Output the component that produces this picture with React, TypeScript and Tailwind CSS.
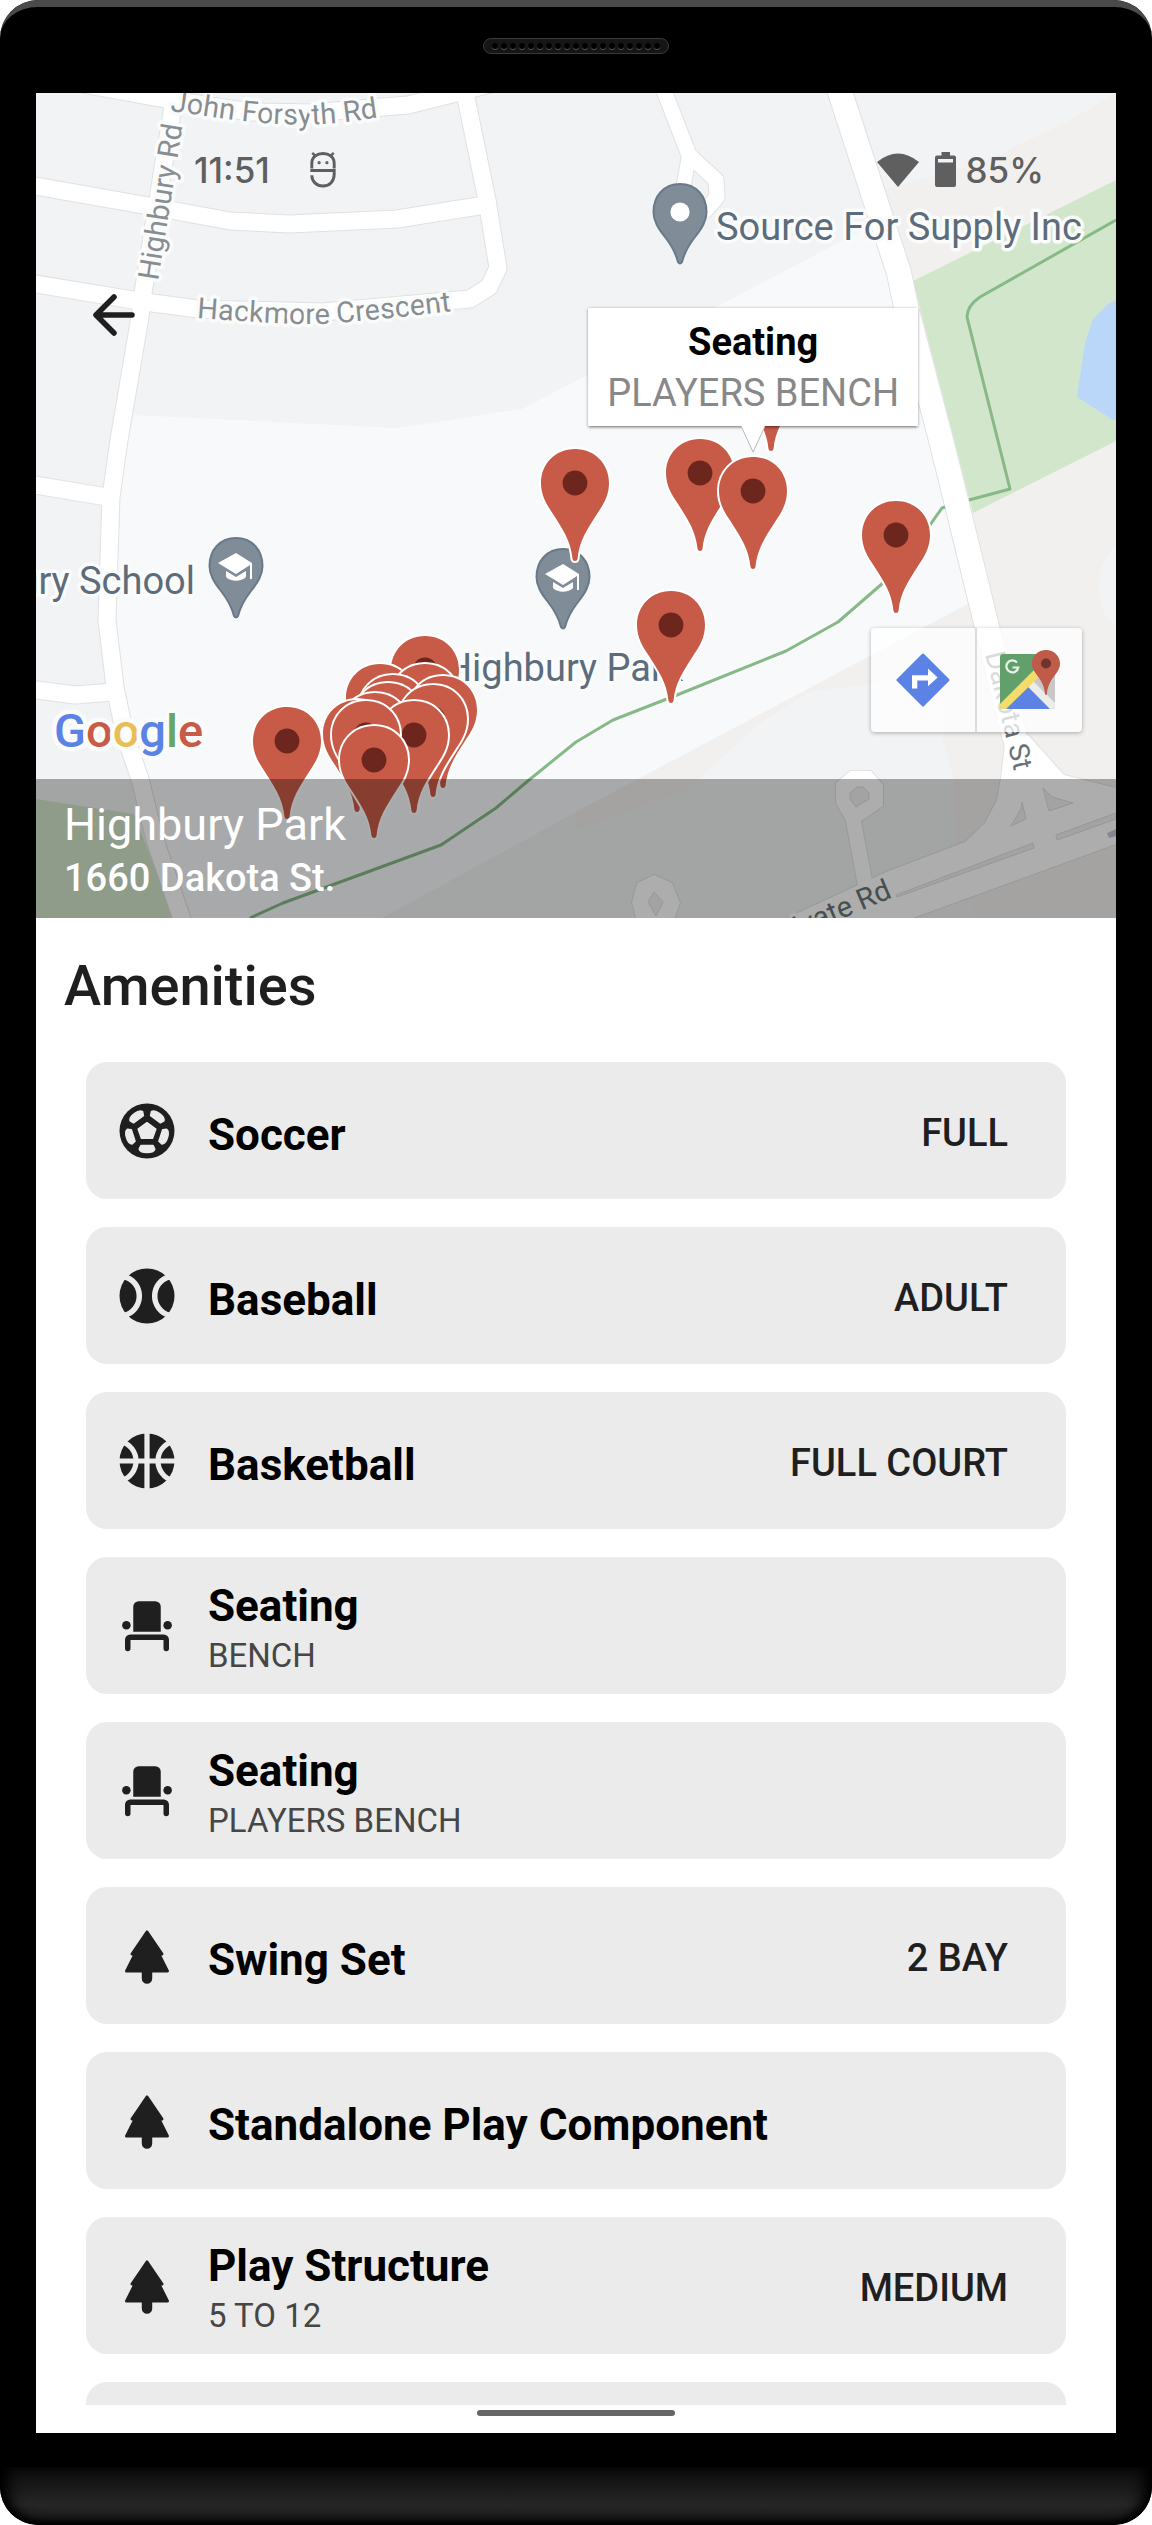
import type { ReactNode } from "react";

type IconName = "soccer" | "baseball" | "basketball" | "seat" | "tree";

type Amenity = { icon: IconName; name: string; detail?: string; size?: string };

const AMENITIES: Amenity[] = [
  { icon: "soccer", name: "Soccer", size: "FULL" },
  { icon: "baseball", name: "Baseball", size: "ADULT" },
  { icon: "basketball", name: "Basketball", size: "FULL COURT" },
  { icon: "seat", name: "Seating", detail: "BENCH" },
  { icon: "seat", name: "Seating", detail: "PLAYERS BENCH" },
  { icon: "tree", name: "Swing Set", size: "2 BAY" },
  { icon: "tree", name: "Standalone Play Component" },
  { icon: "tree", name: "Play Structure", detail: "5 TO 12", size: "MEDIUM" },
  { icon: "tree", name: "Play Structure", detail: "2 TO 5", size: "SMALL" },
];

const GLYPHS: Record<IconName, ReactNode> = {
  soccer: (
    <>
      <circle cx="12" cy="12" r="10" />
      <g fill="#ebebeb" stroke="#ebebeb" strokeWidth="0.6" strokeLinejoin="round">
        <path d="M12 9 15.2 11.3 14 14.6H10L8.8 11.3Z" />
        {[0, 72, 144, 216, 288].map((a) => (
          <path
            key={a}
            transform={`rotate(${a} 12 12)`}
            d="M9.8 17.3H14.2L14.8 18.6C14.5 19.4 13 19.8 12 19.8S9.5 19.4 9.2 18.6Z"
          />
        ))}
      </g>
    </>
  ),
  baseball: (
    <>
      <circle cx="12" cy="12" r="10" />
      <g fill="none" stroke="#ebebeb" strokeWidth="2">
        <path d="M3.6 4.9A7.3 7.3 0 0 1 3.6 19.1" />
        <path d="M20.4 4.9A7.3 7.3 0 0 0 20.4 19.1" />
      </g>
    </>
  ),
  basketball: (
    <>
      <circle cx="12" cy="12" r="10" />
      <g fill="none" stroke="#ebebeb" strokeWidth="1.9">
        <path d="M12 1V23M1 12H23" />
        <path d="M2.7 4.9A7.4 7.4 0 0 1 2.7 19.1" />
        <path d="M21.3 4.9A7.4 7.4 0 0 0 21.3 19.1" />
      </g>
    </>
  ),
  seat: (
    <>
      <path d="M7 14.1V5a2 2 0 0 1 2-2h6a2 2 0 0 1 2 2v9.1Z" />
      <circle cx="4.5" cy="11.7" r="1.55" />
      <circle cx="19.5" cy="11.7" r="1.55" />
      <path
        d="M5 20.2V17a.9.9 0 0 1 .9-.9H18.1a.9.9 0 0 1 .9.9V20.2"
        fill="none"
        stroke="#1f1f1f"
        strokeWidth="2"
        strokeLinecap="round"
      />
    </>
  ),
  tree: (
    <path
      d="M12 3.2 17.5 11.3H16.4L19.5 17.5H13.4V20.2a1.4 1.4 0 0 1-2.8 0V17.5H4.5L7.6 11.3H6.5Z"
      stroke="#1f1f1f"
      strokeWidth="1"
      strokeLinejoin="round"
    />
  ),
};

function AmenityRow({ icon, name, detail, size }: Amenity) {
  return (
    <li className="flex min-h-[137px] shrink-0 items-center rounded-[21px] bg-[#ebebeb] pr-[58px] pl-7">
      <svg viewBox="0 0 24 24" className="size-[66px] shrink-0" fill="#1f1f1f" aria-hidden="true">
        {GLYPHS[icon]}
      </svg>
      <div className="min-w-0 flex-1 pt-2 pl-7">
        <h3 className="text-[44px] leading-[52px] font-bold text-black">{name}</h3>
        {detail && <p className="text-[33px] leading-[48px] text-[#464646]">{detail}</p>}
      </div>
      {size && <p className="pt-1 text-[38px] leading-[46px] font-medium text-[#1f1f1f]">{size}</p>}
    </li>
  );
}

const ROADS: { d: string; w: number }[] = [
  { d: "M50 78 165 99 250 112 310 113 408 105 452 94 490 84", w: 17 },
  { d: "M174 100 143 293 140 317 119 440 111 497 107 620 115 687 125 735 140 779 155 840 184 925", w: 17 },
  { d: "M30 185 143 205 230 221 290 224 397 219 485 205", w: 17 },
  { d: "M464 88 487 200 498 268 489 287 470 299 323 312 198 309 145 302 30 283", w: 17 },
  { d: "M30 484 107 497", w: 17 },
  { d: "M30 689 75 695 113 692", w: 17 },
  { d: "M663 88 689 155 716 180 717 197 704 212", w: 15 },
  { d: "M690 150 682 195", w: 14 },
  { d: "M838 86 899 273 906 307 941 440 951 480 987 627 1018 750", w: 24 },
];

const ROAD_AREAS = [
  "M1006 735 1001 778 997 800 985 823 965 842 886 872 787 918V930H880L1116 844V788L1064 775 1028 735Z",
  "M850 771H871L883 785V806L861 821 872 880 858 886 846 821 836 803V783Z",
  "M654 875 672 883 680 903 672 925H638L632 903 637 883Z",
];

const ROAD_GAPS = [
  "M1043 788 1052 797 1073 803 1049 811Z",
  "M1022 802 1026 819 1011 826 1021 809Z",
  "M1056 835 1116 813V819L1057 840Z",
  "M896 895 1033 843 1034 848 897 897Z",
  "M857 787H863L869 793V799L856 807 850 799V793Z",
  "M654 892 663 902 656 916 648 902Z",
];

/* Centre of each marker's dot, drawn from back to front. */
const MARKERS: [number, number][] = [
  [771, 373],
  [700, 473],
  [575, 483],
  [753, 491],
  [896, 535],
  [671, 625],
  [425, 670],
  [380, 698],
  [425, 698],
  [393, 709],
  [443, 710],
  [388, 717],
  [433, 719],
  [375, 727],
  [357, 734],
  [414, 735],
  [366, 735],
  [287, 741],
  [374, 760],
];

function Marker({ x, y }: { x: number; y: number }) {
  return (
    <g transform={`translate(${x} ${y})`}>
      <path
        d="M0-34C-20-34-34-19-34 0-34 13-28 22-22 31-13 45-4 58-2.5 76Q-2 78 0 78T2.5 76C4 58 13 45 22 31 28 22 34 13 34 0 34-19 20-34 0-34Z"
        fill="#c75b47"
        stroke="#fff"
        strokeWidth="4"
        paintOrder="stroke"
      />
      <circle r="12.4" fill="#6c261d" />
    </g>
  );
}

function PlacePin({ x, y, school }: { x: number; y: number; school?: boolean }) {
  return (
    <g transform={`translate(${x} ${y})`}>
      <path
        d="M0-27C-16-27-26.500-15-26.500 1-26.500 10-22 17-15 26-8 35-4 43-2 51Q0 54 2 51C4 43 8 35 15 26 22 17 26.500 10 26.500 1 26.500-15 16-27 0-27Z"
        fill="#808c98"
        stroke="#687a89"
        strokeWidth="2"
      />
      {school ? (
        <g fill="#fff">
          <path d="M0-12-18-2 0 9 14 0V14H16V-2Z" />
          <path d="M-10 6 0 12 10 6V12C5 17-5 17-10 12Z" />
        </g>
      ) : (
        <circle cy="1" r="9.600" fill="#fff" />
      )}
    </g>
  );
}

function MapCanvas() {
  return (
    <svg
      viewBox="36 93 1080 825"
      preserveAspectRatio="xMidYMid slice"
      className="absolute inset-0 size-full"
      fontFamily="Roboto, sans-serif"
      role="img"
      aria-label="Map of Highbury Park"
    >
      <rect x="36" y="93" width="1080" height="825" fill="#f1f3f4" />
      <path d="M134 415 397 428 522 409 576 381 716 307 840 242 890 215 951 480 981 597 576 812 382 918H180L107 690 105 500Z" fill="#f8f9fb" />
      <path d="M1116 93 1065 123 980 163 875 192 906 307 951 480 987 627 1018 750V918H1116Z" fill="#f2f0ee" />
      <path d="M981 597 576 812V830L686 790 760 723 811 691 866 685 945 675 943 740 954 780 956 850 975 918H1020V603Z" fill="#f2f0ee" />
      <path d="M1116 547Q1099 560 1099 587T1116 627Z" fill="#f1f3f4" />
      <path d="M1116 180 913 281 973 513 1116 441Z" fill="#d1e6cb" />
      <path d="M1116 300 1108 304 1093 319 1085 343 1077 397 1113 420H1116Z" fill="#bad7f9" />
      <path d="M36 799 134 814 174 918H36Z" fill="#d1e6cb" />

      <g fill="none" stroke="#dfe1e4" strokeLinejoin="round">
        {ROADS.map((r) => (
          <path key={r.d} d={r.d} strokeWidth={r.w + 2} />
        ))}
        {ROAD_AREAS.map((d) => (
          <path key={d} d={d} strokeWidth="2" />
        ))}
      </g>
      <g fill="none" stroke="#fff" strokeLinejoin="round">
        {ROADS.map((r) => (
          <path key={r.d} d={r.d} strokeWidth={r.w} />
        ))}
      </g>
      <g fill="#fff">
        {ROAD_AREAS.map((d) => (
          <path key={d} d={d} />
        ))}
      </g>
      <g fill="#f1f0ee" stroke="#dcdee0">
        {ROAD_GAPS.map((d) => (
          <path key={d} d={d} />
        ))}
      </g>
      <path d="M1107 833 1116 829V836L1109 838Z" fill="#c4c8d4" />

      <g fill="none" stroke="#87b987" strokeWidth="3" strokeLinejoin="round">
        <path d="M1116 220 980 297Q967 306 967 317L1010 489 969 500" />
        <path d="M945 507 942 508 930 525 883 583 838 622 786 651 677 695 613 720 576 742 529 780 496 808 441 845 283 903 250 918" />
      </g>

      <defs>
        <path id="john-forsyth" d="M170 111C205 115 240 123 290 124.500 325 125.500 350 122 400 114" />
        <path id="hackmore" d="M197 318C240 321 290 325 325 324 365 321 410 316 470 309" />
      </defs>
      <g fontSize="29" fill="#888d91" stroke="#fafbfb" strokeWidth="7" strokeLinejoin="round" paintOrder="stroke">
        <text>
          <textPath href="#john-forsyth">John Forsyth Rd</textPath>
        </text>
        <text>
          <textPath href="#hackmore">Hackmore Crescent</textPath>
        </text>
        <text transform="translate(158 281) rotate(-81)">Highbury Rd</text>
        <text transform="translate(985 654) rotate(76)" fontSize="28" fill="#697377" stroke="#fff">
          Dakota St
        </text>
        <text transform="translate(893 897) rotate(-23)" textAnchor="end" fill="#697377" stroke="#fff">
          Private Rd
        </text>
      </g>

      <PlacePin x={680} y={211} />
      <PlacePin x={236} y={565} school />
      <PlacePin x={563} y={576} school />
      <g fontSize="38" fill="#5d6c7b" stroke="#fafbfb" strokeWidth="7" strokeLinejoin="round" paintOrder="stroke">
        <text x="716" y="240">
          Source For Supply Inc
        </text>
        <text x="195" y="594" textAnchor="end">
          Highbury School
        </text>
        <text x="445" y="681">
          Highbury Park
        </text>
      </g>

      {MARKERS.map(([x, y]) => (
        <Marker key={`${x}-${y}`} x={x} y={y} />
      ))}

      <text
        x="54"
        y="747"
        fontSize="47"
        fontWeight="500"
        stroke="#fafbfb"
        strokeWidth="9"
        strokeLinejoin="round"
        paintOrder="stroke"
      >
        <tspan fill="#5c82e6">G</tspan>
        <tspan fill="#c75b47">o</tspan>
        <tspan fill="#e8bf57">o</tspan>
        <tspan fill="#5c82e6">g</tspan>
        <tspan fill="#6aa564">l</tspan>
        <tspan fill="#c75b47">e</tspan>
      </text>
    </svg>
  );
}

function StatusBar() {
  return (
    <div className="flex items-center justify-between pt-[58px] pr-[72px] pl-[158px] font-['Inter',sans-serif] text-[35px] leading-[36px] font-medium text-[#5f5f5f]">
      <div className="flex items-center gap-10">
        <span>11:51</span>
        <svg viewBox="0 0 26 38" className="h-[37px] w-[26px]" fill="none" stroke="#5f5f5f" strokeWidth="3" aria-hidden="true">
          <path d="M1.500 18V13C1.500 6 7 2.500 13 2.500S24.500 6 24.500 13V18" />
          <path d="M0 20H24.500V24C24.500 31 20 36 13 36S1.500 31 1.500 25" />
          <path d="M2 2 6 6M24 2 20 6" strokeWidth="2.500" />
          <circle cx="9" cy="12" r="0.700" strokeWidth="2" />
          <circle cx="17" cy="12" r="0.700" strokeWidth="2" />
        </svg>
      </div>
      <div className="flex items-center">
        <svg viewBox="0 0 42 34" className="h-[34px] w-[42px]" fill="#5f5f5f" aria-hidden="true">
          <path d="M0 9Q21-8 42 9L21 34Z" />
        </svg>
        <svg viewBox="0 0 21 35" className="ml-4 h-[35px] w-[21px]" fill="#5f5f5f" aria-hidden="true">
          <path fillRule="evenodd" d="M6.500 0h8.500v3.500H19a2 2 0 0 1 2 2V33a2 2 0 0 1-2 2H2a2 2 0 0 1-2-2V5.500a2 2 0 0 1 2-2H6.500ZM3 7V10.500H18V7Z" />
        </svg>
        <span className="ml-2.5">85%</span>
      </div>
    </div>
  );
}

function InfoWindow() {
  return (
    <div className="absolute top-[26.1%] left-[66.4%] -translate-x-1/2">
      <div className="bg-white px-[19px] pt-2.5 pb-1.5 text-center text-[38px] leading-[48px] whitespace-nowrap shadow-[0_1px_3px_rgba(0,0,0,0.6)]">
        <p className="font-bold text-black">Seating</p>
        <p className="leading-[54px] text-[#888]">PLAYERS BENCH</p>
      </div>
      <svg viewBox="0 0 24 27" className="mx-auto block h-[27px] w-6" aria-hidden="true">
        <path d="M0 0 12 26 24 0" fill="#fff" stroke="#b8b8b8" strokeWidth="1" />
      </svg>
    </div>
  );
}

function MapActions() {
  return (
    <div className="absolute right-[34px] bottom-[186px] flex h-[104px] rounded bg-white/75 shadow-[0_1px_4px_rgba(0,0,0,0.3)]">
      <button type="button" aria-label="Directions" className="grid w-[106px] place-items-center border-r-2 border-[#dcdcdc]">
        <svg viewBox="0 0 54 54" className="size-[54px]" aria-hidden="true">
          <path d="M27 2 52 27 27 52 2 27Z" fill="#5c82e6" stroke="#5c82e6" strokeWidth="3" strokeLinejoin="round" />
          <path d="M16 35.500V22.300H32V15.600L41.600 24.600 32 33.300V27.600H21.300V35.500Z" fill="#fff" />
        </svg>
      </button>
      <button type="button" aria-label="Open in Google Maps" className="grid w-[105px] place-items-center">
        <svg viewBox="0 0 60 60" className="size-[60px]" aria-hidden="true">
          <clipPath id="maps-tile">
            <rect y="4" width="55" height="55" rx="3" />
          </clipPath>
          <g clipPath="url(#maps-tile)">
            <rect y="4" width="55" height="55" fill="#62a06b" />
            <path d="M28 37 60 4V64Z" fill="#c8c8c8" />
            <path d="M28 37 33 31 60 58V64H54Z" fill="#ececec" />
            <path d="M6 59 28 37 50 59Z" fill="#5c82e6" />
            <path d="M-2 56 42 12V24L4 61H-2Z" fill="#f3dc6c" />
          </g>
          <path d="M17 12.500A6 6 0 1 0 18.300 17.500H12.500" fill="none" stroke="#e9f2ea" strokeWidth="2.200" />
          <path d="M46 0C38 0 32 6 32 13.500 32 24 44 28 45 44Q46 46 47 44C48 28 60 24 60 13.500 60 6 54 0 46 0Z" fill="#c05a49" />
          <circle cx="46" cy="13.500" r="5" fill="#6c352d" />
        </svg>
      </button>
    </div>
  );
}

function SpeakerGrille() {
  return (
    <div className="flex h-4 w-[186px] items-center justify-center gap-[3px] rounded-full border border-[#3a3a3a] bg-[#161616]">
      {Array.from({ length: 19 }, (_, i) => (
        <span key={i} className="size-1.5 rounded-full bg-black shadow-[0_1px_0_#555]" />
      ))}
    </div>
  );
}

export default function App() {
  return (
    <div className="bg-white font-['Roboto',sans-serif]">
      <div className="flex h-screen flex-col overflow-hidden rounded-[38px] bg-black">
        <div className="flex h-[93px] shrink-0 justify-center rounded-t-[38px] border-t-[7px] border-[#4a4a4a] pt-[31px]">
          <SpeakerGrille />
        </div>

        <div className="mx-9 flex min-h-0 flex-1 flex-col bg-white">
          <header className="relative aspect-[1080/825] shrink-0 overflow-hidden">
            <MapCanvas />
            <div className="relative">
              <StatusBar />
              <button type="button" aria-label="Back" className="mt-[93px] ml-11 grid size-[68px] place-items-center">
                <svg viewBox="0 0 44 42" className="h-[42px] w-11" fill="none" stroke="#1f1f1f" strokeWidth="5.500" strokeLinecap="round" strokeLinejoin="round" aria-hidden="true">
                  <path d="M40 21H4M22 3 4 21 22 39" />
                </svg>
              </button>
            </div>
            <InfoWindow />
            <MapActions />
            <div className="absolute inset-x-0 bottom-0 bg-black/32 px-7 pt-5 pb-3 text-white">
              <h1 className="text-[45px] leading-[52px]">Highbury Park</h1>
              <p className="text-[38px] leading-[55px] font-medium">1660 Dakota St.</p>
            </div>
          </header>

          <main className="min-h-0 flex-1 overflow-y-auto [scrollbar-width:none]">
            <h2 className="px-7 pt-9 pb-11 text-[56px] leading-[64px] font-medium text-[#1f1f1f]">Amenities</h2>
            <ul className="flex flex-col gap-7 px-[50px] pb-7">
              {AMENITIES.map((a, i) => (
                <AmenityRow key={i} {...a} />
              ))}
            </ul>
          </main>

          <div className="flex h-7 shrink-0 justify-center pt-[5px]">
            <div className="h-1.5 w-[198px] rounded-full bg-[#666]" />
          </div>
        </div>

        <div className="mt-[34px] h-[58px] shrink-0 rounded-b-[38px] bg-linear-to-b from-[#0b0b0b] via-[#262626] via-65% to-[#151515] shadow-[inset_0_-4px_6px_#000,inset_14px_0_14px_-6px_#000,inset_-14px_0_14px_-6px_#000]" />
      </div>
    </div>
  );
}
